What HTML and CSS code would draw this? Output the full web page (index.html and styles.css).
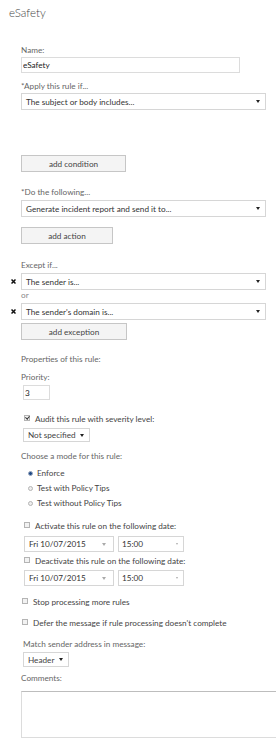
FILE: index.html
```html
<!DOCTYPE html>
<html lang="en">
<head>
    <meta charset="UTF-8">
    <meta name="viewport" content="width=device-width, initial-scale=1.0">
    <title>eSafety</title>
    <link rel="stylesheet" href="styles.css">
</head>
<body>
    <h1 class="title">eSafety</h1>
    <form class="rule-form">
        <label class="label" for="ruleName">Name:</label>
        <input class="name-input" type="text" id="ruleName" value="eSafety">

        <label class="label gap-8">*Apply this rule if...</label>
        <div class="select gap-1"><span>The subject or body includes...</span><span class="caret"></span></div>

        <button type="button" class="btn btn-condition gap-45">add condition</button>

        <label class="label gap-15">*Do the following...</label>
        <div class="select gap-2"><span>Generate incident report and send it to...</span><span class="caret"></span></div>

        <button type="button" class="btn btn-action gap-10">add action</button>

        <label class="label gap-16">Except if...</label>
        <div class="cond-row gap-2">
            <span class="remove"><svg width="5" height="5" viewBox="0 0 5 5"><path d="M0.5 0.5 L4.5 4.5 M4.5 0.5 L0.5 4.5" stroke="#111" stroke-width="1.5"/></svg></span>
            <div class="select"><span>The sender is...</span><span class="caret"></span></div>
        </div>
        <div class="label label-or">or</div>
        <div class="cond-row gap-2">
            <span class="remove"><svg width="5" height="5" viewBox="0 0 5 5"><path d="M0.5 0.5 L4.5 4.5 M4.5 0.5 L0.5 4.5" stroke="#111" stroke-width="1.5"/></svg></span>
            <div class="select"><span>The sender's domain is...</span><span class="caret"></span></div>
        </div>

        <button type="button" class="btn btn-exception gap-3">add exception</button>

        <div class="label gap-14">Properties of this rule:</div>
        <label class="label gap-7" for="priority">Priority:</label>
        <input class="priority-input" type="text" id="priority" value="3">

        <div class="check-row indent gap-14"><span class="checkbox checked"></span><span>Audit this rule with severity level:</span></div>
        <div class="dropdown severity gap-3"><span>Not specified</span><span class="caret"></span></div>

        <div class="label gap-9">Choose a mode for this rule:</div>
        <ul class="modes">
            <li><span class="radio on"></span>Enforce</li>
            <li><span class="radio"></span>Test with Policy Tips</li>
            <li><span class="radio"></span>Test without Policy Tips</li>
        </ul>

        <div class="check-row indent gap-10"><span class="checkbox"></span><span>Activate this rule on the following date:</span></div>
        <div class="date-row gap-4">
            <div class="dropdown date"><span>Fri 10/07/2015</span><span class="caret light"></span></div>
            <div class="dropdown time"><span>15:00</span><span class="caret light small"></span></div>
        </div>

        <div class="check-row indent gap-4"><span class="checkbox"></span><span>Deactivate this rule on the following date:</span></div>
        <div class="date-row gap-3">
            <div class="dropdown date"><span>Fri 10/07/2015</span><span class="caret light"></span></div>
            <div class="dropdown time"><span>15:00</span><span class="caret light small"></span></div>
        </div>

        <div class="check-row gap-11"><span class="checkbox"></span><span>Stop processing more rules</span></div>
        <div class="check-row gap-10"><span class="checkbox"></span><span>Defer the message if rule processing doesn't complete</span></div>

        <div class="label match-label gap-10">Match sender address in message:</div>
        <div class="dropdown header-select gap-2"><span>Header</span><span class="caret"></span></div>

        <label class="label gap-6" for="comments">Comments:</label>
        <textarea class="comments" id="comments"></textarea>
    </form>
</body>
</html>
```

FILE: styles.css
```css
body {
    margin: 0;
    font-family: Lato, "Liberation Sans", sans-serif;
    font-size: 8.2px;
    color: #444;
    background-color: #fff;
    overflow-x: hidden;
}

.title {
    margin: 0;
    padding: 6px 0 0 9px;
    font-size: 11.5px;
    font-weight: 300;
    line-height: 14px;
    color: #444;
}

.rule-form {
    padding: 25px 0 0 21px;
}

.label {
    display: block;
    line-height: 11px;
    color: #666;
}

.label-or {
    color: #888;
}

.match-label {
    margin-left: 2px;
}

/* spacing helpers */
.gap-1 { margin-top: 1px; }
.gap-2 { margin-top: 2px; }
.gap-3 { margin-top: 3px; }
.gap-4 { margin-top: 4px; }
.gap-6 { margin-top: 6px; }
.gap-7 { margin-top: 7px; }
.gap-8 { margin-top: 8px; }
.gap-9 { margin-top: 9px; }
.gap-10 { margin-top: 10px; }
.gap-11 { margin-top: 11px; }
.gap-14 { margin-top: 14px; }
.gap-15 { margin-top: 15px; }
.gap-16 { margin-top: 16px; }
.gap-45 { margin-top: 45px; }

.name-input {
    display: block;
    box-sizing: border-box;
    width: 219px;
    height: 16px;
    margin: 1px 0 0;
    padding: 0 1px;
    border: 1px solid #dcdcdc;
    font: inherit;
    color: #222;
    outline: none;
}

.priority-input {
    display: block;
    box-sizing: border-box;
    width: 27px;
    height: 15px;
    margin: 2px 0 0 2px;
    padding: 0 1px;
    border: 1px solid #dcdcdc;
    font: inherit;
    color: #222;
}

.select {
    box-sizing: border-box;
    display: flex;
    align-items: center;
    justify-content: space-between;
    width: 245px;
    height: 17px;
    padding: 0 5px 0 4px;
    border: 1px solid #d6d6d6;
    background-color: #fff;
    color: #333;
}

.caret {
    width: 0;
    height: 0;
    border-left: 2px solid transparent;
    border-right: 2px solid transparent;
    border-top: 3px solid #222;
}

.caret.light {
    border-top-color: #aaa;
}

.caret.small {
    border-left-width: 1.5px;
    border-right-width: 1.5px;
    border-top-width: 2px;
}

.cond-row {
    display: flex;
    align-items: center;
    margin-left: -12px;
}

.remove {
    display: flex;
    width: 12px;
    padding-left: 2px;
    box-sizing: border-box;
}

.btn {
    display: block;
    box-sizing: border-box;
    height: 17px;
    padding: 0;
    border: 1px solid #c6c6c6;
    background-color: #f4f4f4;
    font: inherit;
    color: #444;
    cursor: pointer;
}

.btn-condition {
    width: 105px;
}

.btn-action {
    width: 92px;
}

.btn-exception {
    width: 106px;
}

.check-row {
    display: flex;
    align-items: flex-start;
    line-height: 11px;
    color: #444;
    margin-left: 1px;
}

.check-row.indent {
    margin-left: 3px;
}

.checkbox {
    position: relative;
    box-sizing: border-box;
    width: 6px;
    height: 6px;
    margin: 1px 5px 0 0;
    border: 1px solid #b4b4b4;
    background-color: #f2f2f2;
}

.checkbox.checked::after {
    content: "";
    position: absolute;
    left: 1px;
    top: -1px;
    width: 1.5px;
    height: 3px;
    border-right: 1px solid #333;
    border-bottom: 1px solid #333;
    transform: rotate(40deg);
}

.dropdown {
    box-sizing: border-box;
    display: flex;
    align-items: center;
    justify-content: space-between;
    border: 1px solid #d6d6d6;
    background-color: #fff;
    color: #444;
    padding: 0 5px 0 4px;
}

.severity {
    width: 67px;
    height: 14px;
    margin-left: 2px;
}

.header-select {
    width: 46px;
    height: 15px;
    margin-left: 2px;
}

.modes {
    list-style: none;
    margin: 4px 0 0 7px;
    padding: 0;
}

.modes li {
    display: flex;
    align-items: center;
    height: 15px;
    line-height: 15px;
    color: #444;
}

.radio {
    box-sizing: border-box;
    width: 5px;
    height: 5px;
    margin-right: 4px;
    border: 1px solid #b4b4b4;
    border-radius: 50%;
    background-color: #eee;
}

.radio.on {
    background-color: #1f4a86;
    border-color: #9aa8c0;
}

.date-row {
    display: flex;
    margin-left: 3px;
}

.date {
    width: 90px;
    height: 16px;
    color: #333;
}

.date .caret {
    margin-right: 2px;
}

.time {
    width: 66px;
    height: 16px;
    margin-left: 4px;
    padding-left: 3px;
    color: #333;
}

.comments {
    display: block;
    box-sizing: border-box;
    width: 256px;
    height: 47px;
    margin: 7px 0 0;
    border: 1px solid #dcdcdc;
    border-top-color: #bdbdbd;
    resize: none;
    font: inherit;
}
```
